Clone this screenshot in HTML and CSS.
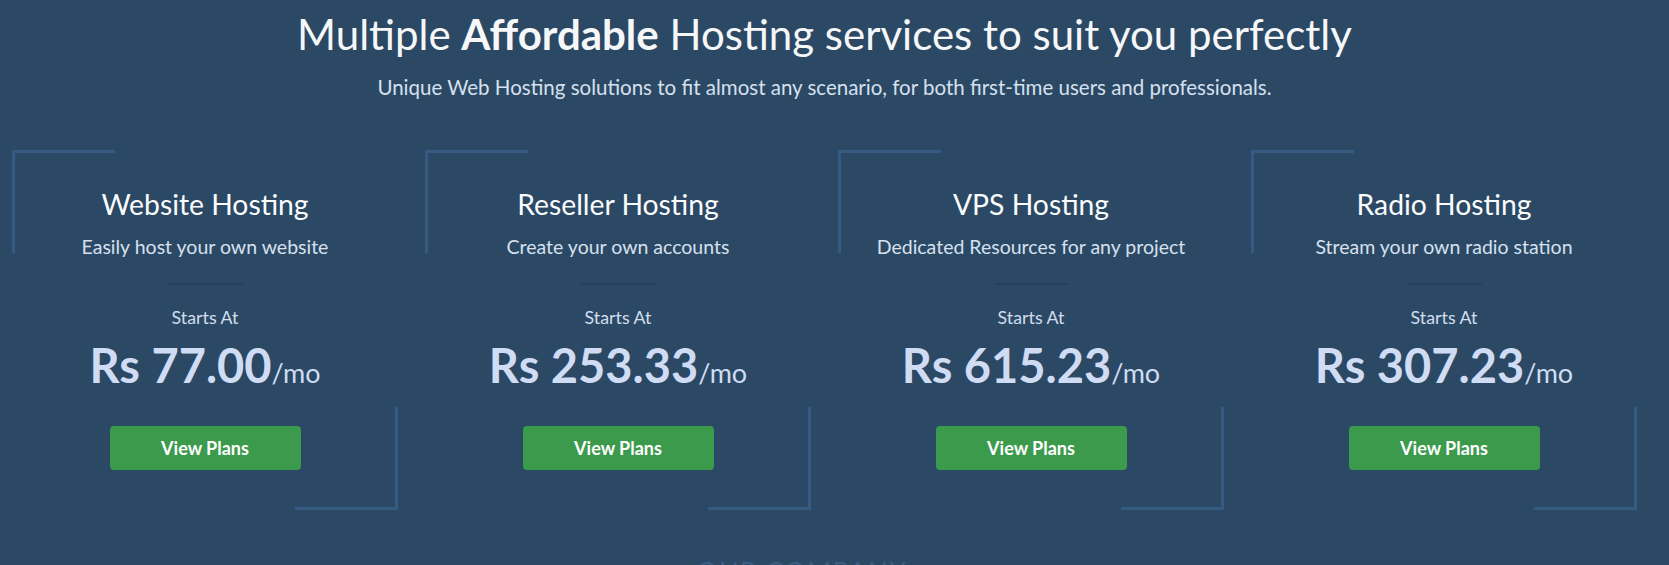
FILE: index.html
```html
<!DOCTYPE html>
<html lang="en">
<head>
<meta charset="utf-8">
<title>Hosting services</title>
<link rel="stylesheet" href="styles.css">
</head>
<body>
<section class="services">
  <header class="intro">
    <h1 class="intro-title">Multiple <strong>Affordable</strong> Hosting services to suit you perfectly</h1>
    <p class="intro-sub">Unique Web Hosting solutions to fit almost any scenario, for both first-time users and professionals.</p>
  </header>
  <div class="cards">
    <article class="card">
      <h2 class="card-title">Website Hosting</h2>
      <p class="card-sub">Easily host your own website</p>
      <hr class="card-rule">
      <p class="card-starts">Starts At</p>
      <p class="card-price">Rs 77.00<span class="per">/mo</span></p>
      <a class="card-btn" href="#">View Plans</a>
    </article>
    <article class="card">
      <h2 class="card-title">Reseller Hosting</h2>
      <p class="card-sub">Create your own accounts</p>
      <hr class="card-rule">
      <p class="card-starts">Starts At</p>
      <p class="card-price">Rs 253.33<span class="per">/mo</span></p>
      <a class="card-btn" href="#">View Plans</a>
    </article>
    <article class="card">
      <h2 class="card-title">VPS Hosting</h2>
      <p class="card-sub">Dedicated Resources for any project</p>
      <hr class="card-rule">
      <p class="card-starts">Starts At</p>
      <p class="card-price">Rs 615.23<span class="per">/mo</span></p>
      <a class="card-btn" href="#">View Plans</a>
    </article>
    <article class="card">
      <h2 class="card-title">Radio Hosting</h2>
      <p class="card-sub">Stream your own radio station</p>
      <hr class="card-rule">
      <p class="card-starts">Starts At</p>
      <p class="card-price">Rs 307.23<span class="per">/mo</span></p>
      <a class="card-btn" href="#">View Plans</a>
    </article>
  </div>
  <h3 class="next-title">OUR COMPANY</h3>
</section>
</body>
</html>
```
FILE: styles.css
```css
html, body {
  margin: 0;
  padding: 0;
}
body {
  background: #2b4965;
  font-family: "Lato", "Open Sans", "Liberation Sans", sans-serif;
  color: #ffffff;
  overflow: hidden;
}
.services {
  width: 1625px;
  margin-left: 12px;
  display: flex;
  flex-direction: column;
}
.intro {
  text-align: center;
  padding-top: 8px;
}
.intro-title {
  margin: 0;
  font-size: 42px;
  line-height: 52px;
  font-weight: 400;
  color: #f6f7f8;
}
.intro-title strong {
  font-weight: 700;
}
.intro-sub {
  margin: 14px 0 0;
  font-size: 20.5px;
  line-height: 26px;
  color: #d6e0ef;
}
.cards {
  display: grid;
  grid-template-columns: repeat(4, 386px);
  column-gap: 27px;
  margin-top: 50px;
}
.card {
  position: relative;
  height: 360px;
  display: flex;
  flex-direction: column;
  align-items: center;
  text-align: center;
  padding-top: 36px;
  box-sizing: border-box;
}
.card::before,
.card::after {
  content: "";
  position: absolute;
  width: 100px;
  height: 100px;
  border-color: #365b82;
  border-style: solid;
}
.card::before {
  left: 0;
  top: 0;
  border-width: 3px 0 0 3px;
}
.card::after {
  right: 0;
  bottom: 0;
  border-width: 0 3px 3px 0;
}
.card-title {
  margin: 0;
  font-size: 28.3px;
  line-height: 36px;
  font-weight: 400;
  color: #fbfcfd;
}
.card-sub {
  margin: 13px 0 0;
  font-size: 19.5px;
  line-height: 24px;
  color: #d6e0ef;
}
.card-rule {
  width: 75px;
  height: 2px;
  border: 0;
  margin: 24px 0 0;
  background: #25405a;
}
.card-starts {
  margin: 21px 0 0;
  font-size: 17.8px;
  line-height: 22px;
  color: #d2ddee;
}
.card-price {
  margin: 10px 0 0;
  font-size: 47px;
  line-height: 54px;
  font-weight: 700;
  color: #cfdcf4;
}
.card-price .per {
  font-size: 27px;
  font-weight: 400;
}
.card-btn {
  margin-top: 26px;
  width: 191px;
  height: 44px;
  border-radius: 4px;
  background: #3c9a4d;
  color: #ffffff;
  font-size: 18px;
  font-weight: 700;
  text-decoration: none;
  display: flex;
  align-items: center;
  justify-content: center;
}
.next-title {
  margin: 46px 0 0;
  padding-right: 45px;
  text-align: center;
  font-size: 26px;
  line-height: 32px;
  font-weight: 400;
  letter-spacing: 1.6px;
  color: #3a5d82;
}
```
